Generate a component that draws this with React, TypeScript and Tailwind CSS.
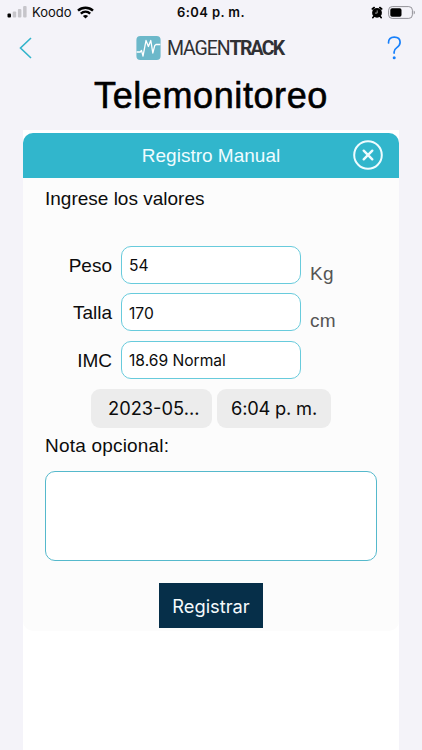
import React from "react";

type FieldProps = {
  label: string;
  value: string;
  unit?: string;
};

function Field({ label, value, unit }: FieldProps) {
  return (
    <div className="flex h-[38px] items-center">
      <label className="w-[89px] pt-[2px] text-right text-[19px] leading-[38px] whitespace-nowrap">
        {label}
      </label>
      <div className="ml-[9px] flex h-[38px] w-[180px] items-center rounded-[10px] border border-[#68cbdc] bg-white pt-[2px] pl-[7px] font-[Inter,sans-serif] text-[15.6px]">
        {value}
      </div>
      {unit && (
        <span className="ml-[9px] pt-[18px] text-[19px] leading-[22px] tracking-[0.3px] text-[#555555]">
          {unit}
        </span>
      )}
    </div>
  );
}

function StatusBar() {
  return (
    <div className="grid h-6 grid-cols-3 items-center font-[Inter,sans-serif]">
      <div className="flex items-center pl-[7px]">
        <svg width="20" height="12" viewBox="0 0 20 12">
          <rect x="0.5" y="7.5" width="3.5" height="4" rx="1" fill="#000" />
          <rect x="5.7" y="5.5" width="3.5" height="6" rx="1" fill="#c6c5ca" />
          <rect x="10.9" y="3" width="3.5" height="8.5" rx="1" fill="#c6c5ca" />
          <rect x="16.1" y="0" width="3.5" height="11.5" rx="1" fill="#c6c5ca" />
        </svg>
        <span className="ml-[5px] pt-px text-[13px] whitespace-nowrap">Koodo</span>
        <svg className="ml-[5px]" width="17" height="13" viewBox="0 0 17 13" fill="none" stroke="#000">
          <path d="M1 4.6C5.2 .7 11.8 .7 16 4.6" strokeWidth="2.4" />
          <path d="M3.8 7.6C6.5 5.1 10.5 5.1 13.2 7.6" strokeWidth="2.3" />
          <path d="M8.5 12.6 5.9 9.9C7.4 8.6 9.6 8.6 11.1 9.9Z" fill="#000" stroke="none" />
        </svg>
      </div>
      <div className="pt-px text-center text-[13px] font-semibold tracking-[0.4px] whitespace-nowrap">
        6:04 p. m.
      </div>
      <div className="flex items-center justify-end gap-[5px] pr-[6px]">
        <svg width="12" height="13" viewBox="0 0 12 13">
          <path d="M1.3 3 3.2 1.5M10.7 3 8.8 1.5M2.8 10.5 1.8 11.6M9.2 10.5l1 1.1" stroke="#000" strokeWidth="1.6" strokeLinecap="round" />
          <circle cx="6" cy="6.8" r="4.9" fill="#000" />
          <path d="M6.2 4.4v2.7H4" fill="none" stroke="#bbb" strokeWidth="0.8" />
        </svg>
        <svg width="28" height="13" viewBox="0 0 28 13">
          <rect x="0.6" y="0.6" width="23.8" height="11.8" rx="3.6" fill="none" stroke="#929197" />
          <rect x="2.3" y="2.3" width="11.2" height="8.4" rx="1.8" fill="#000" />
          <path d="M25.7 4.5c1.6.5 1.6 3.5 0 4z" fill="#929197" />
        </svg>
      </div>
    </div>
  );
}

function NavBar() {
  return (
    <div className="grid h-[48px] grid-cols-[136px_150px_136px] items-center">
      <svg className="ml-[19px]" width="14" height="22" viewBox="0 0 14 22" fill="none" stroke="#32b4cb" strokeWidth="1.6">
        <path d="M12 1 1.5 11 12 21" />
      </svg>
      <div className="flex items-center">
        <svg className="shrink-0" width="25" height="24" viewBox="0 0 25 24">
          <rect x="0.4" width="24.2" height="24" rx="4" fill="#6cb8ca" />
          <path
            d="M.6 16h3.6l1.3-1.6L7 20.2 10 4.5l2.4 6 2.4-6L16.8 17l2-7.6 1.2-.9h4.4"
            fill="none"
            stroke="#fff"
            strokeWidth="1.3"
            strokeLinejoin="round"
          />
        </svg>
        <span className="ml-[6px] pt-px font-[Roboto,sans-serif] text-[19.5px] leading-6 tracking-[-1.1px] whitespace-nowrap text-[#303034]">
          MAGEN<b className="tracking-[-1.8px]">TRACK</b>
        </span>
      </div>
      <svg className="ml-[101px]" width="15" height="24" viewBox="0 0 15 24">
        <path
          d="M1.5 7C1.3 3.3 3.6 1.1 7.2 1.1c3.5 0 5.9 2 5.9 5.2 0 2.5-1.2 3.9-3.3 5.3-2.1 1.4-2.7 2.5-2.7 4.5v1"
          fill="none"
          stroke="#1880fb"
          strokeWidth="1.7"
          strokeLinecap="round"
        />
        <circle cx="7.2" cy="21.8" r="1.5" fill="#1880fb" />
      </svg>
    </div>
  );
}

function App() {
  return (
    <div className="flex h-[750px] w-[422px] flex-col overflow-hidden bg-[#f4f3f9] font-['Liberation_Sans',Arial,sans-serif] text-[#0c0c0c]">
      <StatusBar />
      <NavBar />

      <h1 className="h-[58px] pt-[4px] text-center text-[36px] leading-[40px] tracking-[0.6px] text-black [-webkit-text-stroke:0.6px_black]">
        Telemonitoreo
      </h1>

      {/* Form panel */}
      <main className="mx-[23px] flex-1 bg-white pt-[3px]">
        <section className="h-[498px] rounded-[10px] bg-[#fcfcfc]">
          <header className="relative flex h-[45px] items-center justify-center rounded-t-[10px] bg-[#31b6cc] pt-[2px] text-[19px] text-[#effcff]">
            Registro Manual
            <svg className="absolute top-[7px] right-[16px]" width="30" height="30" viewBox="0 0 30 30" fill="none" stroke="#effcff">
              <circle cx="15" cy="15" r="13.8" strokeWidth="2" />
              <path d="m10.7 10.7 8.6 8.6M19.3 10.7l-8.6 8.6" strokeWidth="2.4" strokeLinecap="round" />
            </svg>
          </header>

          <p className="pt-[10px] pl-[22px] text-[19px] leading-[22px]">Ingrese los valores</p>

          <div className="mt-[36px] flex flex-col gap-[9.3px]">
            <Field label="Peso" value="54" unit="Kg" />
            <Field label="Talla" value="170" unit="cm" />
            <Field label="IMC" value="18.69 Normal" />
          </div>

          {/* Date and time */}
          <div className="mt-[10px] ml-[68px] flex gap-[5px] font-[Inter,sans-serif] text-[18.3px]">
            <div className="flex h-[39px] w-[121px] items-center rounded-[9px] bg-[#ececec] pt-[2px] pl-[17px]">
              2023-05...
            </div>
            <div className="flex h-[39px] w-[114px] items-center justify-center rounded-[9px] bg-[#ececec] pt-[2px] tracking-[-0.2px]">
              6:04 p. m.
            </div>
          </div>

          <p className="mt-[7px] pl-[22px] text-[19px] leading-[22px] tracking-[0.2px]">Nota opcional:</p>
          <div className="mx-[22px] mt-[14px] h-[90px] rounded-[10px] border border-[#55b9cc] bg-white" />

          <button className="mx-auto mt-[22.4px] flex h-[45px] w-[104px] items-center justify-center bg-[#062f49] pt-[2px] font-[Inter,sans-serif] text-[18.3px] text-[#f4fafc]">
            Registrar
          </button>
        </section>
      </main>
    </div>
  );
}

export default App;
